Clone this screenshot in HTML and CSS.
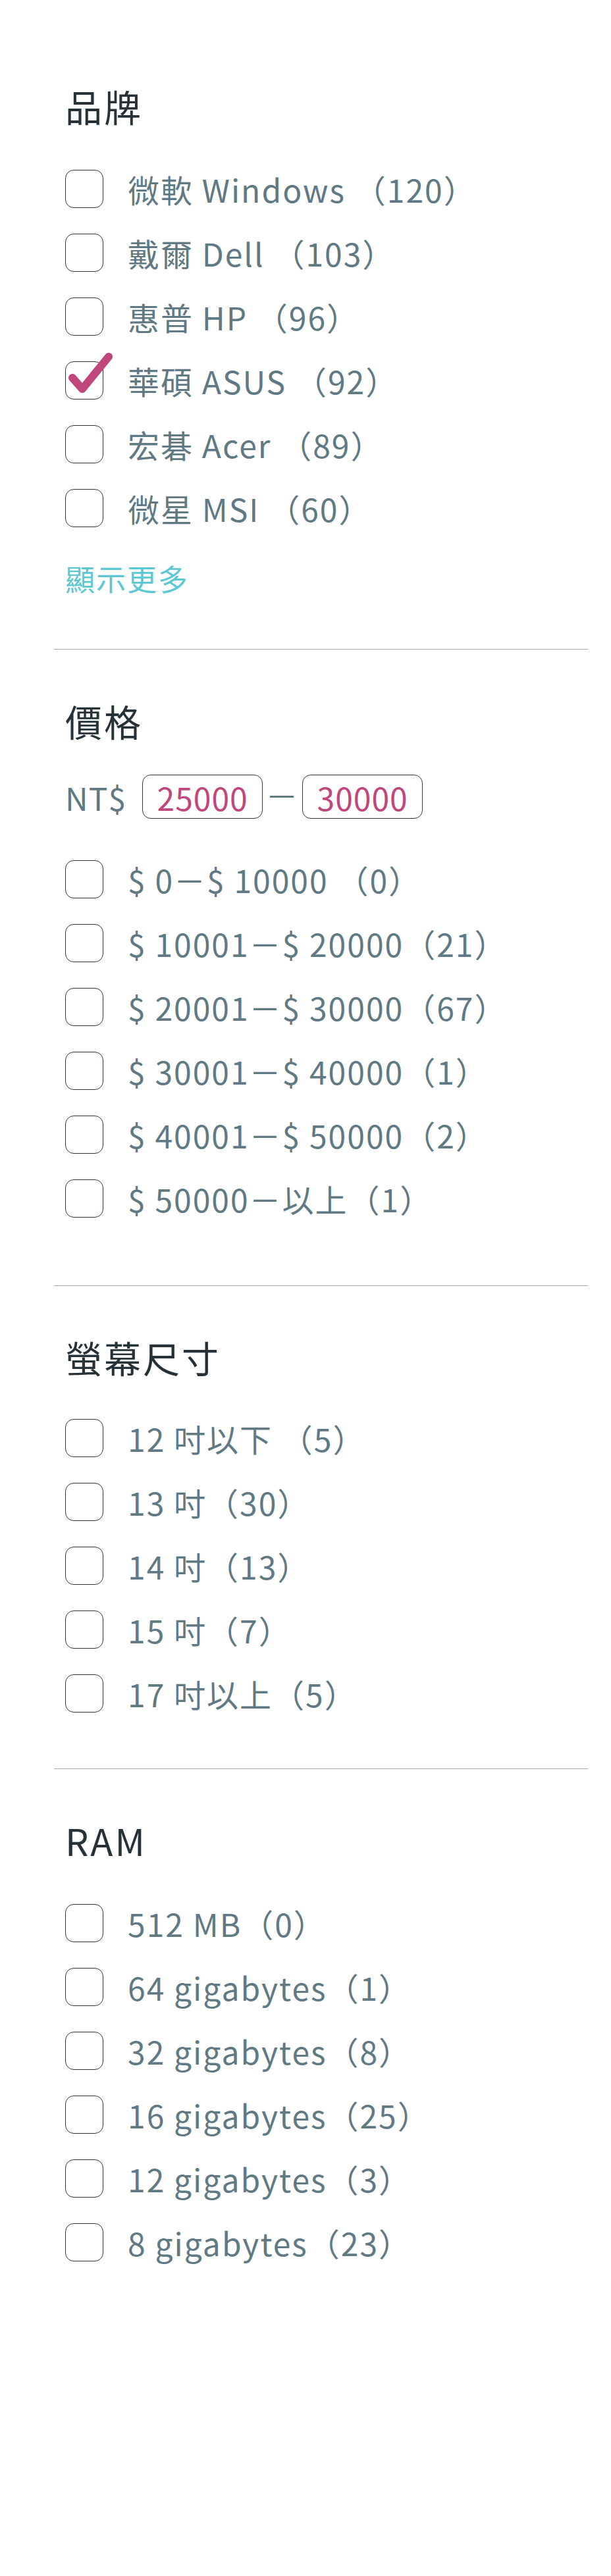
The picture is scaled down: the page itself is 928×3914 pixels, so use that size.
FILE: index.html
```html
<!DOCTYPE html>
<html lang="zh-Hant">
<head>
<meta charset="utf-8">
<title>篩選</title>
<link rel="stylesheet" href="styles.css">
</head>
<body>
<div class="filters">
  <section class="group group-brand">
    <h2 class="group-title">品牌</h2>
    <ul class="opt-list">
      <li class="opt"><span class="box"></span><span class="opt-label">微軟 Windows （120）</span></li>
      <li class="opt"><span class="box"></span><span class="opt-label">戴爾 Dell （103）</span></li>
      <li class="opt"><span class="box"></span><span class="opt-label">惠普 HP （96）</span></li>
      <li class="opt"><span class="box is-checked"><svg class="tick" viewBox="0 0 80 70" width="80" height="70"><path d="M10 32 L25 49 L65 0" fill="none" stroke="#c0477b" stroke-width="12" stroke-linecap="round" stroke-linejoin="round"/></svg></span><span class="opt-label">華碩 ASUS （92）</span></li>
      <li class="opt"><span class="box"></span><span class="opt-label">宏碁 Acer （89）</span></li>
      <li class="opt"><span class="box"></span><span class="opt-label">微星 MSI （60）</span></li>
    </ul>
    <a class="more" href="#">顯示更多</a>
  </section>

  <section class="group group-price">
    <h2 class="group-title">價格</h2>
    <div class="range">
      <span class="range-cur">NT$</span>
      <span class="range-input">25000</span>
      <span class="range-dash"></span>
      <span class="range-input">30000</span>
    </div>
    <ul class="opt-list">
      <li class="opt"><span class="box"></span><span class="opt-label">$ 0－$ 10000 （0）</span></li>
      <li class="opt"><span class="box"></span><span class="opt-label">$ 10001－$ 20000（21）</span></li>
      <li class="opt"><span class="box"></span><span class="opt-label">$ 20001－$ 30000（67）</span></li>
      <li class="opt"><span class="box"></span><span class="opt-label">$ 30001－$ 40000（1）</span></li>
      <li class="opt"><span class="box"></span><span class="opt-label">$ 40001－$ 50000（2）</span></li>
      <li class="opt"><span class="box"></span><span class="opt-label">$ 50000－以上（1）</span></li>
    </ul>
  </section>

  <section class="group group-screen">
    <h2 class="group-title">螢幕尺寸</h2>
    <ul class="opt-list">
      <li class="opt"><span class="box"></span><span class="opt-label">12 吋以下 （5）</span></li>
      <li class="opt"><span class="box"></span><span class="opt-label">13 吋（30）</span></li>
      <li class="opt"><span class="box"></span><span class="opt-label">14 吋（13）</span></li>
      <li class="opt"><span class="box"></span><span class="opt-label">15 吋（7）</span></li>
      <li class="opt"><span class="box"></span><span class="opt-label">17 吋以上（5）</span></li>
    </ul>
  </section>

  <section class="group group-ram">
    <h2 class="group-title">RAM</h2>
    <ul class="opt-list">
      <li class="opt"><span class="box"></span><span class="opt-label">512 MB（0）</span></li>
      <li class="opt"><span class="box"></span><span class="opt-label">64 gigabytes（1）</span></li>
      <li class="opt"><span class="box"></span><span class="opt-label">32 gigabytes（8）</span></li>
      <li class="opt"><span class="box"></span><span class="opt-label">16 gigabytes（25）</span></li>
      <li class="opt"><span class="box"></span><span class="opt-label">12 gigabytes（3）</span></li>
      <li class="opt"><span class="box"></span><span class="opt-label">8 gigabytes（23）</span></li>
    </ul>
  </section>
</div>
</body>
</html>
```

FILE: styles.css
```css
* { box-sizing: border-box; }

html, body {
  margin: 0;
  padding: 0;
  background: #ffffff;
}

body {
  font-family: "Noto Sans CJK TC", "Noto Sans", sans-serif;
  color: #5f7a84;
  width: 928px;
  min-height: 3914px;
  text-spacing-trim: space-all;
  font-feature-settings: "palt" 0, "halt" 0;
}

.filters {
  margin-left: 82px;
  width: 811px;
  padding-top: 53px;
}

.group {
  padding: 80px 0 85px 17px;
  border-bottom: 1px solid #a9a9a9;
}

.group:last-child {
  border-bottom: none;
}

.group-title {
  margin: 0 0 69px;
  font-size: 56px;
  line-height: 1;
  font-weight: 400;
  letter-spacing: 3px;
  color: #263238;
}

.opt-list {
  list-style: none;
  margin: 0;
  padding: 0;
  display: flex;
  flex-direction: column;
  gap: 39px;
}

.opt {
  display: flex;
  align-items: center;
  gap: 37px;
  height: 58px;
}

.box {
  position: relative;
  flex: none;
  width: 58px;
  height: 58px;
  border: 1.5px solid #2f3538;
  border-radius: 13px;
  background: #fff;
}

.tick {
  position: absolute;
  left: 0;
  top: -8px;
  overflow: visible;
}

.opt-label {
  font-size: 48px;
  line-height: 1;
  letter-spacing: 2px;
  white-space: nowrap;
  color: #5f7a84;
}

.more {
  display: block;
  margin-top: 55px;
  font-size: 45px;
  line-height: 1;
  letter-spacing: 2px;
  color: #5bc8d3;
  text-decoration: none;
}

.group-price .group-title {
  margin-bottom: 54px;
}

.group-price {
  padding-bottom: 103px;
}

.range {
  display: flex;
  align-items: center;
  height: 67px;
  margin-bottom: 63px;
}

.range-cur {
  font-size: 48px;
  line-height: 1;
  letter-spacing: 1px;
  margin-right: 24px;
  color: #5f7a84;
}

.range-input {
  width: 183px;
  height: 67px;
  border: 1.5px solid #2f3538;
  border-radius: 13px;
  display: flex;
  align-items: center;
  justify-content: center;
  font-size: 48px;
  line-height: 1;
  letter-spacing: 1px;
  color: #c0477b;
}

.range-dash {
  width: 36px;
  height: 3px;
  background: #5f7a84;
  margin: 0 13px 0 11px;
}

.group-screen .group-title {
  margin-bottom: 66px;
}
```
